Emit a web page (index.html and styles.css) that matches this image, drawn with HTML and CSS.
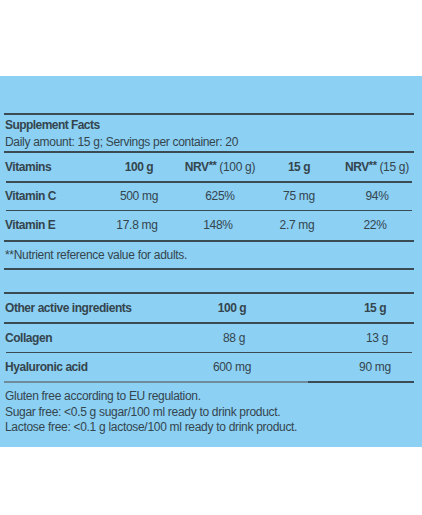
FILE: index.html
```html
<!doctype html>
<html lang="en">
<head>
    <meta charset="UTF-8">
    <title>Supplement Facts</title>
    <link rel="stylesheet" href="styles.css">
</head>
<body>
<div class="panel">

    <div class="facts">
        <div class="title">Supplement Facts</div>
        <div class="sub">Daily amount: 15 g; Servings per container: 20</div>
    </div>

    <!--维生素表-->
    <div class="vit-row head inset">
        <div class="name">Vitamins</div>
        <div>100 g</div>
        <div>NRV<sup>**</sup> <span class="light">(100 g)</span></div>
        <div>15 g</div>
        <div>NRV<sup>**</sup> <span class="light">(15 g)</span></div>
    </div>
    <div class="vit-row thin inset r-c">
        <div class="name">Vitamin C</div>
        <div>500 mg</div>
        <div>625%</div>
        <div>75 mg</div>
        <div>94%</div>
    </div>
    <div class="vit-row thick r-e">
        <div class="name">Vitamin E</div>
        <div>17.8 mg</div>
        <div>148%</div>
        <div>2.7 mg</div>
        <div>22%</div>
    </div>

    <div class="note thick">**Nutrient reference value for adults.</div>
    <div class="gap thick"></div>

    <!--其他成分-->
    <div class="oth-row head thick">
        <div class="name">Other active ingredients</div>
        <div>100 g</div>
        <div></div>
        <div>15 g</div>
    </div>
    <div class="oth-row thin inset">
        <div class="name">Collagen</div>
        <div>88 g</div>
        <div></div>
        <div>13 g</div>
    </div>
    <div class="oth-row last">
        <div class="name">Hyaluronic acid</div>
        <div>600 mg</div>
        <div></div>
        <div>90 mg</div>
    </div>

    <div class="info">
        Gluten free according to EU regulation.<br>
        Sugar free: &lt;0.5 g sugar/100 ml ready to drink product.<br>
        Lactose free: &lt;0.1 g lactose/100 ml ready to drink product.
    </div>

</div>
</body>
</html>
```

FILE: styles.css
```css
body {
    margin: 0;
    background: #fff;
    font-family: "Liberation Sans", Arial, sans-serif;
    font-size: 12px;
    letter-spacing: -0.3px;
    color: #34454e;
}

.panel {
    margin-top: 76px;
    height: 371px;
    box-sizing: border-box;
    background: #8cd0f3;
    padding: 37px 8px 0 4px;
}

.facts {
    border-top: 2px solid #3a4b54;
    border-bottom: 2px solid #3a4b54;
    padding: 1px 0 1px 1px;
}

.title {
    font-weight: bold;
    letter-spacing: -0.55px;
    line-height: 18px;
}

.sub {
    line-height: 16px;
}

/*表格行*/
.vit-row, .oth-row {
    display: grid;
    text-align: center;
}

.vit-row {
    grid-template-columns: 92px 82px 80px 78px 78px;
}

.oth-row {
    grid-template-columns: 186px 84px 62px 78px;
}

.name {
    text-align: left;
    font-weight: bold;
    letter-spacing: -0.45px;
    padding-left: 1px;
}

.head {
    font-weight: bold;
    letter-spacing: -0.45px;
    line-height: 28px;
}

.head .light {
    font-weight: normal;
    letter-spacing: -0.3px;
}

sup {
    font-size: 11px;
    vertical-align: top;
    line-height: 24px;
}

.inset {
    margin: 0 2px;
}

.inset .name {
    margin-left: -2px;
}

.thin {
    border-bottom: 1px solid #3a4b54;
}

.thick {
    border-bottom: 2px solid #3a4b54;
}

.head.inset {
    border-bottom: 2px solid #3a4b54;
}

.r-c {
    line-height: 27px;
}

.r-e {
    line-height: 29px;
}

.oth-row {
    line-height: 28px;
}

.note {
    line-height: 26px;
    padding-left: 1px;
}

.gap {
    height: 22px;
}

/*最后一行下边线左浅右深*/
.last {
    padding-bottom: 2px;
    background: linear-gradient(to right, #6f8c9b 0, #6f8c9b 304px, #3a4b54 304px) bottom / 100% 2px no-repeat;
}

.info {
    line-height: 15.5px;
    padding: 6px 0 0 1px;
}
```
